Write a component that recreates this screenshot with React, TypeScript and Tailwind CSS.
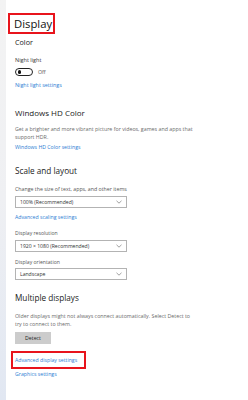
import React from "react";

const Chevron = () => (
  <svg width="6" height="4" viewBox="0 0 6 4" className="block">
    <path d="M0.5 0.8 L3 3.2 L5.5 0.8" fill="none" stroke="#777" strokeWidth="0.7" />
  </svg>
);

const Dropdown = ({ label, mt }: { label: string; mt: string }) => (
  <div className={"w-[112px] h-[12px] border border-[#b3b3b3] bg-white flex items-center justify-between pl-[4px] pr-[4px] " + mt}>
    <span className="text-[5.1px] leading-[10px] text-[#333]">{label}</span>
    <Chevron />
  </div>
);

export default function App() {
  return (
    <div
      className="w-[248px] h-[400px] bg-white flex overflow-hidden"
      style={{ fontFamily: '"Open Sans", "Noto Sans", sans-serif' }}
    >
      <div className="w-[6px] h-full bg-gradient-to-b from-[#f3f3f3] via-[#eff0f3] to-[#e1e7f2]" />
      <div className="flex-1 pl-[9px] pt-[13px] flex flex-col items-start">
        <div className="ml-[-7px] w-[47px] h-[21px] border-2 border-[#e8141c] flex items-center pl-[4px]">
          <span className="text-[11.3px] leading-[17px] text-[#111]">Display</span>
        </div>
        <div className="mt-[3px] h-[11px] leading-[11px] text-[7.2px] text-[#222]">Color</div>
        <div className="mt-[8px] h-[8px] leading-[8px] text-[5.5px] text-[#333]">Night light</div>
        <div className="mt-[4px] h-[8px] flex items-center">
          <div className="w-[18px] h-[7.5px] rounded-full border border-[#222] flex items-center pl-[1.5px]">
            <div className="w-[3.5px] h-[3.5px] rounded-full bg-[#111]" />
          </div>
          <span className="ml-[5px] text-[5.3px] leading-[8px] text-[#555]">Off</span>
        </div>
        <div className="mt-[5px] h-[8px] leading-[8px] text-[5.4px] text-[#2b7cd3]">Night light settings</div>

        <div className="mt-[19px] h-[10px] leading-[10px] text-[8px] text-[#222]">Windows HD Color</div>
        <div className="mt-[7px] h-[16px] leading-[8px] text-[5.3px] text-[#6a6a6a]">
          Get a brighter and more vibrant picture for videos, games and apps that
          <br />
          support HDR.
        </div>
        <div className="mt-[2px] h-[8px] leading-[8px] text-[5.2px] text-[#2b7cd3]">Windows HD Color settings</div>

        <div className="mt-[15px] h-[10px] leading-[10px] text-[8.2px] text-[#222]">Scale and layout</div>
        <div className="mt-[9px] h-[8px] leading-[8px] text-[5.25px] text-[#555]">
          Change the size of text, apps, and other items
        </div>
        <Dropdown label="100% (Recommended)" mt="mt-[3px]" />
        <div className="mt-[5px] h-[8px] leading-[8px] text-[5.2px] text-[#2b7cd3]">Advanced scaling settings</div>
        <div className="mt-[8px] h-[8px] leading-[8px] text-[5.1px] text-[#555]">Display resolution</div>
        <Dropdown label="1920 × 1080 (Recommended)" mt="mt-[3px]" />
        <div className="mt-[6px] h-[8px] leading-[8px] text-[5.1px] text-[#555]">Display orientation</div>
        <Dropdown label="Landscape" mt="mt-[2px]" />

        <div className="mt-[13px] h-[10px] leading-[10px] text-[8.2px] text-[#222]">Multiple displays</div>
        <div className="mt-[9px] h-[16px] leading-[8px] text-[5.3px] text-[#6a6a6a]">
          Older displays might not always connect automatically. Select Detect to
          <br />
          try to connect to them.
        </div>
        <div className="mt-[4px] w-[36px] h-[11.5px] bg-[#cccccc] flex items-center justify-center text-[5.2px] leading-[8px] text-[#222]">
          Detect
        </div>
        <div className="mt-[7.5px] ml-[-4px] w-[75px] h-[18px] border-2 border-[#e8141c] flex items-center pl-[2px]">
          <span className="text-[5.2px] leading-[8px] text-[#2b7cd3]">Advanced display settings</span>
        </div>
        <div className="mt-[1px] h-[8px] leading-[8px] text-[5.2px] text-[#2b7cd3]">Graphics settings</div>
      </div>
    </div>
  );
}
